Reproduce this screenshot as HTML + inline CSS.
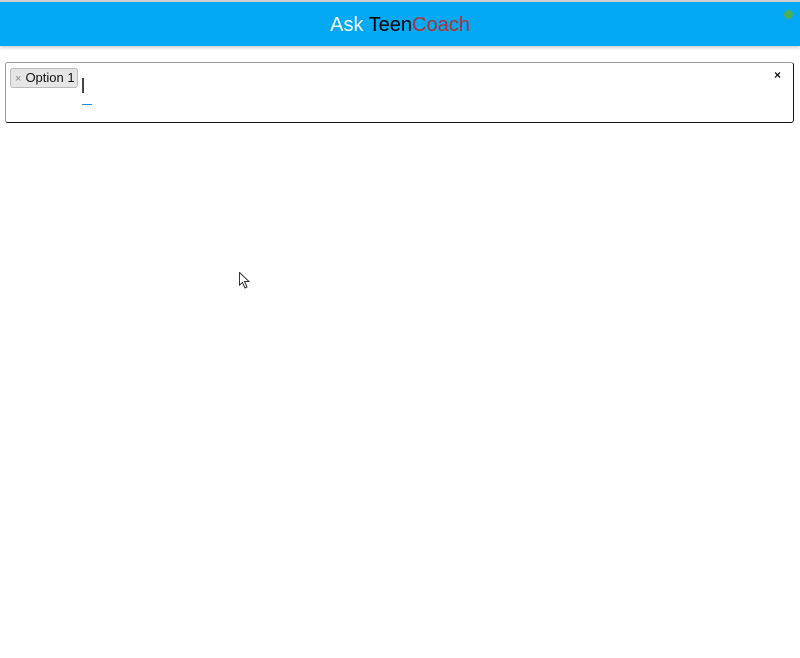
<!DOCTYPE html>
<html><head><style>
body{margin:0;width:800px;height:658px;background:#fff;font-family:"Liberation Sans",sans-serif;position:relative;overflow:hidden}
.top{position:absolute;left:0;top:0;width:800px;height:2px;background:#d0d0d0}
.hdr{position:absolute;left:0;top:2px;width:800px;height:44px;background:#03a9f4;box-shadow:0 2px 3px rgba(0,0,0,.18)}
.title{position:absolute;left:0;width:800px;top:11px;text-align:center;font-size:20px;line-height:24px;color:#fff}
.dot{position:absolute;left:784px;top:8px;width:9px;height:9px;border-radius:50%;background:#4caf50}
.box{position:absolute;left:5px;top:62px;width:787px;height:59px;border:1px solid #333;border-radius:3px}
.box{border-color:#999 #111 #111 #999}
.chip{position:absolute;left:4px;top:5px;width:66px;height:18px;background:#e6e6e6;border:1px solid #bbb;border-radius:3px;font-size:13px;line-height:18px;color:#111}
.chip span{color:#888;font-size:11px;margin:0 4px 0 4px}
.cur{position:absolute;left:76px;top:15px;width:2px;height:15px;background:#444}
.ul{position:absolute;left:76px;top:41px;width:10px;height:1px;background:#1e88e5}
.x{position:absolute;left:768px;top:5px;font-size:12px;font-weight:bold;color:#111}
</style></head><body>
<div class="top"></div>
<div class="hdr"><div class="title">Ask <span style="color:#000">Teen</span><span style="color:#b03030">Coach</span></div><div class="dot"></div></div>
<div class="box">
<div class="chip"><span>×</span>Option 1</div>
<div class="cur"></div><div class="ul"></div>
<div class="x">×</div>
</div>
<svg style="position:absolute;left:239px;top:272px" width="12" height="18" viewBox="0 0 12 18"><path d="M0.5 0.5V13L3.5 10.5L6 16L8 15L5.5 9.5H10Z" fill="#fff" stroke="#333" stroke-width="1"/></svg>
</body></html>
